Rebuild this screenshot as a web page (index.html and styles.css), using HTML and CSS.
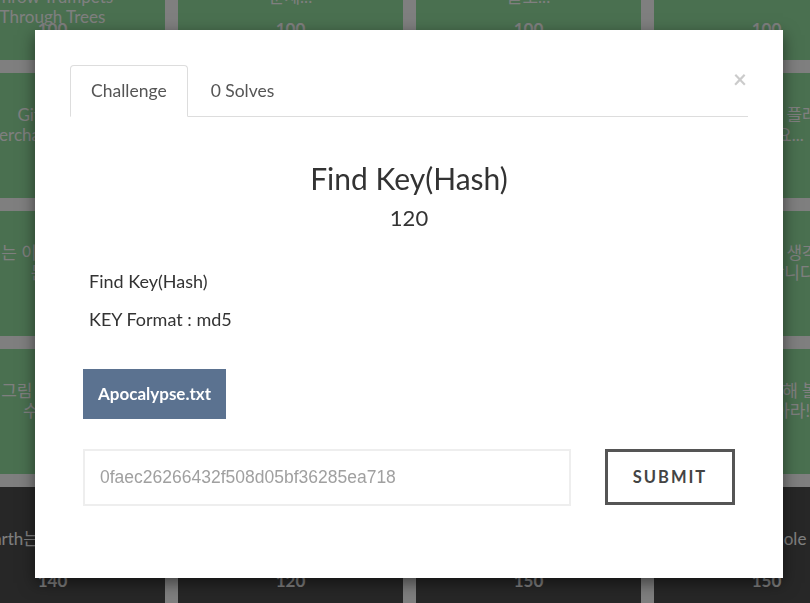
FILE: index.html
```html
<!DOCTYPE html>
<html lang="ko">
	<head>
		<meta charset="UTF-8" />
		<meta name="viewport" content="width=device-width, initial-scale=1" />
		<title>Challenges</title>
		<link rel="stylesheet" href="styles.css">
	</head>
	<body>
		<div class="board">
			<div class="tile solved">
				<div class="tile-name">Please<br>Don't<br>Throw Trumpets<br>Through Trees</div>
				<div class="tile-value">100</div>
			</div>
			<div class="tile solved">
				<div class="tile-name">쉬운 문제를 풀어 보는<br>문제...</div>
				<div class="tile-value">100</div>
			</div>
			<div class="tile solved">
				<div class="tile-name">플래그를 찾는<br>글도...</div>
				<div class="tile-value">100</div>
			</div>
			<div class="tile solved">
				<div class="tile-name">Warm Up</div>
				<div class="tile-value">100</div>
			</div>

			<div class="tile solved">
				<div class="tile-name">Gift Shop<br>Merchandise Shop</div>
				<div class="tile-value">100</div>
			</div>
			<div class="tile solved">
				<div class="tile-name">Easy Crypto</div>
				<div class="tile-value">100</div>
			</div>
			<div class="tile solved">
				<div class="tile-name">Web Basic</div>
				<div class="tile-value">100</div>
			</div>
			<div class="tile solved">
				<div class="tile-name">숨겨진 메시지 플래그를<br>찾으세요...</div>
				<div class="tile-value">100</div>
			</div>

			<div class="tile solved">
				<div class="tile-name">문제는 이미지 분석이다<br>문제...</div>
				<div class="tile-value">100</div>
			</div>
			<div class="tile solved">
				<div class="tile-name">Reversing</div>
				<div class="tile-value">100</div>
			</div>
			<div class="tile solved">
				<div class="tile-name">Forensic</div>
				<div class="tile-value">100</div>
			</div>
			<div class="tile solved">
				<div class="tile-name">당신은 뭘 생각<br>뭐라고 합니다</div>
				<div class="tile-value">100</div>
			</div>

			<div class="tile solved">
				<div class="tile-name">그림 속 숫자를<br>수 있나?</div>
				<div class="tile-value">100</div>
			</div>
			<div class="tile solved">
				<div class="tile-name">Network</div>
				<div class="tile-value">100</div>
			</div>
			<div class="tile solved">
				<div class="tile-name">Misc</div>
				<div class="tile-value">100</div>
			</div>
			<div class="tile solved">
				<div class="tile-name">직접 도전해 볼<br>풀어 보아라!</div>
				<div class="tile-value">100</div>
			</div>

			<div class="tile">
				<div class="tile-name">Earth는 무엇일까요</div>
				<div class="tile-value">140</div>
			</div>
			<div class="tile">
				<div class="tile-name">Find Key(Hash)</div>
				<div class="tile-value">120</div>
			</div>
			<div class="tile">
				<div class="tile-name">Pwnable</div>
				<div class="tile-value">150</div>
			</div>
			<div class="tile">
				<div class="tile-name">Black Hole</div>
				<div class="tile-value">150</div>
			</div>
		</div>

		<div class="backdrop"></div>

		<div class="modal">
			<div class="dialog">
				<button class="close" type="button">&times;</button>
				<ul class="tabs">
					<li class="tab active">Challenge</li>
					<li class="tab">0 Solves</li>
				</ul>
				<div class="pane">
					<h3 class="chal-name">Find Key(Hash)</h3>
					<h4 class="chal-value">120</h4>
					<div class="chal-desc">
						<p>Find Key(Hash)</p>
						<p>KEY Format : md5</p>
					</div>
					<div class="files">
						<a class="file-btn" href="#">Apocalypse.txt</a>
					</div>
					<form class="submit-row">
						<input class="key-input" type="text" name="key" value="0faec26266432f508d05bf36285ea718" />
						<button class="submit-btn" type="submit">SUBMIT</button>
					</form>
				</div>
			</div>
		</div>
	</body>
</html>
```

FILE: styles.css
```css
body {
	margin: 0;
	background: #fff;
	font-family: 'Lato', 'Noto Sans CJK KR', sans-serif;
	overflow: hidden;
}

/* challenge board behind the modal */

.board {
	display: grid;
	grid-template-columns: repeat(4, 225px);
	grid-auto-rows: 125px;
	gap: 13px;
	margin: -65px 0 0 -60px;
}

.tile {
	display: flex;
	flex-direction: column;
	align-items: center;
	justify-content: center;
	box-sizing: border-box;
	padding: 20px 15px;
	background: #4e4e4e;
	color: #fff;
	text-align: center;
}

.tile.solved {
	background: #94e0a0;
}

.tile-name {
	min-height: 62px;
	display: flex;
	align-items: center;
	justify-content: center;
	font-size: 17px;
	line-height: 20px;
	white-space: nowrap;
}

.tile-value {
	font-size: 17px;
	font-weight: 700;
	line-height: 22px;
}

/* modal */

.backdrop {
	position: fixed;
	top: 0;
	right: 0;
	bottom: 0;
	left: 0;
	background: rgba(0, 0, 0, 0.5);
}

.modal {
	position: fixed;
	top: 0;
	right: 0;
	bottom: 0;
	left: 0;
}

.dialog {
	position: relative;
	width: 748px;
	box-sizing: border-box;
	margin: 30px 0 0 35px;
	padding: 35px 35px 72px;
	background: #fff;
	box-shadow: 0 5px 15px rgba(0, 0, 0, 0.5);
}

.close {
	position: absolute;
	top: 37px;
	right: 36px;
	padding: 0;
	border: 0;
	background: none;
	font-family: 'Lato', sans-serif;
	font-size: 24px;
	font-weight: 700;
	line-height: 1;
	color: #000;
	opacity: 0.2;
	cursor: pointer;
}

.tabs {
	display: flex;
	margin: 0;
	padding: 0;
	list-style: none;
	border-bottom: 1px solid #ddd;
}

.tab {
	margin: 0 2px -1px 0;
	padding: 12px 20px;
	font-size: 17.5px;
	line-height: 26px;
	color: #555;
	border: 1px solid transparent;
	border-radius: 4px 4px 0 0;
	cursor: pointer;
}

.tab.active {
	background: #fff;
	border-color: #ddd #ddd transparent;
}

.chal-name {
	margin: 43px 0 0;
	font-size: 30px;
	font-weight: 400;
	line-height: 36px;
	text-align: center;
	color: #333;
}

.chal-value {
	margin: 9px 0 0;
	font-size: 22px;
	font-weight: 400;
	line-height: 26px;
	text-align: center;
	color: #333;
}

.chal-desc {
	margin-top: 39px;
	padding-left: 19px;
	font-size: 18px;
	line-height: 22px;
	color: #333;
}

.chal-desc p {
	margin: 0;
}

.chal-desc p + p {
	margin-top: 16px;
}

.files {
	margin-top: 39px;
	padding: 0 13px;
}

.file-btn {
	display: inline-block;
	padding: 0 15px;
	background: #5b7290;
	color: #fff;
	font-size: 17px;
	font-weight: 700;
	line-height: 50px;
	text-decoration: none;
}

.submit-row {
	display: flex;
	gap: 34px;
	margin: 30px 0 0;
	padding: 0 13px;
}

.key-input {
	flex: 1;
	height: 57px;
	box-sizing: border-box;
	padding: 0 15px;
	border: 2px solid #eee;
	font-family: 'Liberation Sans', Arial, sans-serif;
	font-size: 17.5px;
	color: #a0a0a0;
	outline: none;
}

.submit-btn {
	width: 130px;
	height: 56px;
	border: 3px solid #555;
	background: #fff;
	font-family: 'Lato', sans-serif;
	font-size: 16.5px;
	font-weight: 700;
	letter-spacing: 2px;
	color: #444;
	cursor: pointer;
}
```
